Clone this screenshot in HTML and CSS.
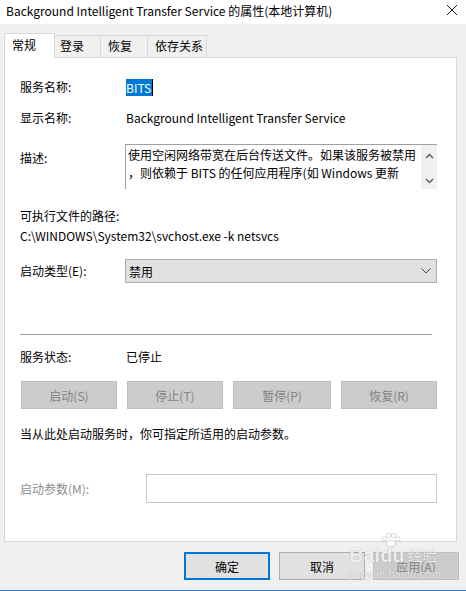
FILE: index.html
```html
<!DOCTYPE html>
<html>

<head>
    <meta charset="UTF-8">
    <title>BITS 的属性</title>
    <link rel="stylesheet" href="styles.css">
</head>

<body>
    <div class="title-bar">
        <span class="title-text">Background Intelligent Transfer Service 的属性(本地计算机)</span>
        <svg class="close-icon" width="12" height="12" viewBox="0 0 12 12">
            <path d="M1 1 L11 11 M11 1 L1 11" stroke="#111" stroke-width="1" fill="none" />
        </svg>
    </div>

    <div class="dialog">
        <div class="tabs">
            <div class="tab active">常规</div>
            <div class="tab">登录</div>
            <div class="tab">恢复</div>
            <div class="tab">依存关系</div>
        </div>

        <div class="panel">
            <div class="row name-row">
                <span class="label">服务名称:</span>
                <span class="value"><span class="selected">BITS</span><span class="caret"></span></span>
            </div>

            <div class="row display-row">
                <span class="label">显示名称:</span>
                <span class="value">Background Intelligent Transfer Service</span>
            </div>

            <div class="row desc-row">
                <span class="label desc-label">描述:</span>
                <div class="desc-box">
                    <div class="desc-text">
                        使用空闲网络带宽在后台传送文件。如果该服务被禁用<br>
                        ，则依赖于 BITS 的任何应用程序(如 Windows 更新
                    </div>
                    <div class="scrollbar">
                        <svg width="9" height="6" viewBox="0 0 9 6">
                            <path d="M1 5 L4.5 1.5 L8 5" stroke="#606060" stroke-width="1.5" fill="none" />
                        </svg>
                        <svg width="9" height="6" viewBox="0 0 9 6">
                            <path d="M1 1 L4.5 4.5 L8 1" stroke="#606060" stroke-width="1.5" fill="none" />
                        </svg>
                    </div>
                </div>
            </div>

            <div class="path-title">可执行文件的路径:</div>
            <div class="path-value">C:\WINDOWS\System32\svchost.exe -k netsvcs</div>

            <div class="row startup-row">
                <span class="label">启动类型(E):</span>
                <div class="select-box">
                    <span>禁用</span>
                    <svg width="10" height="6" viewBox="0 0 10 6">
                        <path d="M0.5 0.5 L5 5 L9.5 0.5" stroke="#444" stroke-width="1" fill="none" />
                    </svg>
                </div>
            </div>

            <div class="separator"></div>

            <div class="row status-row">
                <span class="label">服务状态:</span>
                <span class="value">已停止</span>
            </div>

            <div class="service-buttons">
                <button class="btn disabled">启动(S)</button>
                <button class="btn disabled">停止(T)</button>
                <button class="btn disabled pause-btn">暂停(P)</button>
                <button class="btn disabled">恢复(R)</button>
            </div>

            <div class="hint">当从此处启动服务时，你可指定所适用的启动参数。</div>

            <div class="row params-row">
                <span class="label grey">启动参数(M):</span>
                <div class="params-input"></div>
            </div>
        </div>

        <div class="dialog-buttons">
            <button class="btn default-btn">确定</button>
            <button class="btn normal-btn">取消</button>
            <button class="btn disabled apply-btn">应用(A)</button>
        </div>
    </div>

    <div class="bottom-line"></div>

    <!-- watermark from the screenshot source -->
    <div class="watermark">
        <div class="wm-logo">
            <span>Bai</span>
            <span class="wm-du">du
                <svg class="wm-paw" width="20" height="14" viewBox="0 0 20 14">
                    <circle cx="3" cy="6" r="2.2" />
                    <circle cx="7.5" cy="2.5" r="2.2" />
                    <circle cx="12.5" cy="2.5" r="2.2" />
                    <circle cx="17" cy="6" r="2.2" />
                    <ellipse cx="10" cy="10.5" rx="4.5" ry="3.2" />
                </svg>
            </span>
            <span class="wm-cn">经验</span>
        </div>
        <div class="wm-url">jingyan.baidu.com</div>
    </div>
</body>

</html>
```

FILE: styles.css
```css
body {
    margin: 0;
    width: 466px;
    height: 591px;
    background-color: #f0f0f0;
    font-family: "Noto Sans CJK SC", "Noto Sans", sans-serif;
    font-size: 12px;
    color: #000;
    position: relative;
    overflow: hidden;
}

.title-bar {
    height: 24px;
    background: white;
    display: flex;
    align-items: center;
    justify-content: space-between;
    padding: 0 8px 0 6px;
}

.title-text {
    font-size: 12px;
    margin-top: -3px;
}

.close-icon {
    margin-top: -5px;
}

.dialog {
    padding: 9px 9px 0 4px;
}

.tabs {
    display: flex;
    align-items: flex-end;
    height: 24px;
}

.tab {
    height: 22px;
    line-height: 20px;
    padding: 0;
    white-space: nowrap;
    border: 1px solid #d9d9d9;
    border-bottom: none;
    border-left: none;
    background-color: #f0f0f0;
    box-sizing: border-box;
}

.tab.active {
    background: white;
    height: 25px;
    line-height: 22px;
    border-left: 1px solid #d9d9d9;
    margin-bottom: -1px;
    position: relative;
    z-index: 1;
    width: 51px;
    padding-left: 7px;
}

.tab:nth-child(2) {
    width: 46px;
    padding-left: 5px;
}

.tab:nth-child(3) {
    width: 47px;
    padding-left: 7px;
}

.tab:nth-child(4) {
    width: 59px;
    padding-left: 7px;
}

.panel {
    background: white;
    border: 1px solid #d9d9d9;
    height: 485px;
    box-sizing: border-box;
    padding: 20px 0 0 15px;
}

.row {
    display: flex;
    align-items: center;
}

.label {
    width: 105px;
    flex-shrink: 0;
    line-height: 18px;
}

.label.grey {
    color: #8d8d8d;
}

.value {
    line-height: 18px;
    padding-left: 1px;
    display: flex;
    align-items: center;
}

.selected {
    background-color: #0078d7;
    color: white;
    padding: 0 1px 0 0;
    line-height: 17px;
}

.caret {
    display: inline-block;
    width: 1px;
    height: 17px;
    background: #000;
}

.display-row {
    margin-top: 13px;
}

.desc-row {
    margin-top: 17px;
    align-items: flex-start;
}

.desc-label {
    padding-top: 5px;
}

.desc-box {
    width: 312px;
    height: 45px;
    box-sizing: border-box;
    border-top: 1px solid #a0a0a0;
    border-left: 1px solid #a0a0a0;
    display: flex;
    justify-content: space-between;
}

.desc-text {
    padding: 1px 0 0 2px;
    line-height: 18px;
}

.scrollbar {
    width: 16px;
    background-color: #f0f0f0;
    display: flex;
    flex-direction: column;
    justify-content: space-between;
    align-items: center;
    padding: 8px 0 5px;
    box-sizing: border-box;
}

.path-title {
    margin-top: 18px;
    line-height: 18px;
}

.path-value {
    margin-top: 2px;
    line-height: 18px;
}

.startup-row {
    margin-top: 14px;
}

.select-box {
    width: 312px;
    height: 24px;
    box-sizing: border-box;
    background-color: #e1e1e1;
    border: 1px solid #adadad;
    display: flex;
    align-items: center;
    justify-content: space-between;
    padding: 0 5px 0 3px;
}

.separator {
    margin-top: 51px;
    width: 412px;
    height: 1px;
    background-color: #a0a0a0;
}

.status-row {
    margin-top: 13px;
}

.service-buttons {
    margin-top: 15px;
    width: 416px;
    display: flex;
    justify-content: space-between;
    padding-left: 1px;
}

.btn {
    font-family: inherit;
    font-size: 12px;
    height: 28px;
    width: 96px;
    padding: 0;
    box-sizing: border-box;
    border: 1px solid #adadad;
    background-color: #e1e1e1;
    color: #000;
}

.btn.disabled {
    background-color: #cccccc;
    border-color: #bfbfbf;
    color: #838383;
}

.pause-btn {
    width: 98px;
}

.hint {
    margin-top: 16px;
    line-height: 18px;
}

.params-row {
    margin-top: 31px;
}

.params-row .label {
    width: 126px;
}

.params-input {
    width: 291px;
    height: 29px;
    box-sizing: border-box;
    border: 1px solid #c8c8c8;
    background: white;
}

.dialog-buttons {
    display: flex;
    justify-content: flex-end;
    margin-top: 10px;
    margin-right: -2px;
}

.dialog-buttons .btn {
    width: 86px;
    height: 28px;
}

.default-btn {
    border: 2px solid #0078d7;
    margin-right: 9px;
}

.normal-btn {
    margin-right: 8px;
}

.apply-btn {
    width: 85px;
}

.bottom-line {
    position: absolute;
    left: 0;
    right: 0;
    bottom: 0;
    height: 1px;
    background-color: #2b88d8;
}

.watermark {
    position: absolute;
    left: 349px;
    top: 545px;
    color: rgba(255, 255, 255, 0.85);
    text-shadow: 0 0 1px rgba(0, 0, 0, 0.35);
    font-family: "Liberation Sans", sans-serif;
    pointer-events: none;
}

.wm-logo {
    display: flex;
    align-items: flex-end;
    font-size: 20px;
    font-weight: bold;
    line-height: 20px;
}

.wm-du {
    position: relative;
}

.wm-paw {
    position: absolute;
    left: 1px;
    top: -12px;
    fill: rgba(255, 255, 255, 0.85);
    stroke: rgba(0, 0, 0, 0.15);
}

.wm-cn {
    font-family: "Noto Sans CJK SC", sans-serif;
    font-size: 15px;
    font-weight: normal;
    margin-left: 3px;
}

.wm-url {
    font-size: 11px;
    margin-top: 3px;
    letter-spacing: 0.2px;
}
```
